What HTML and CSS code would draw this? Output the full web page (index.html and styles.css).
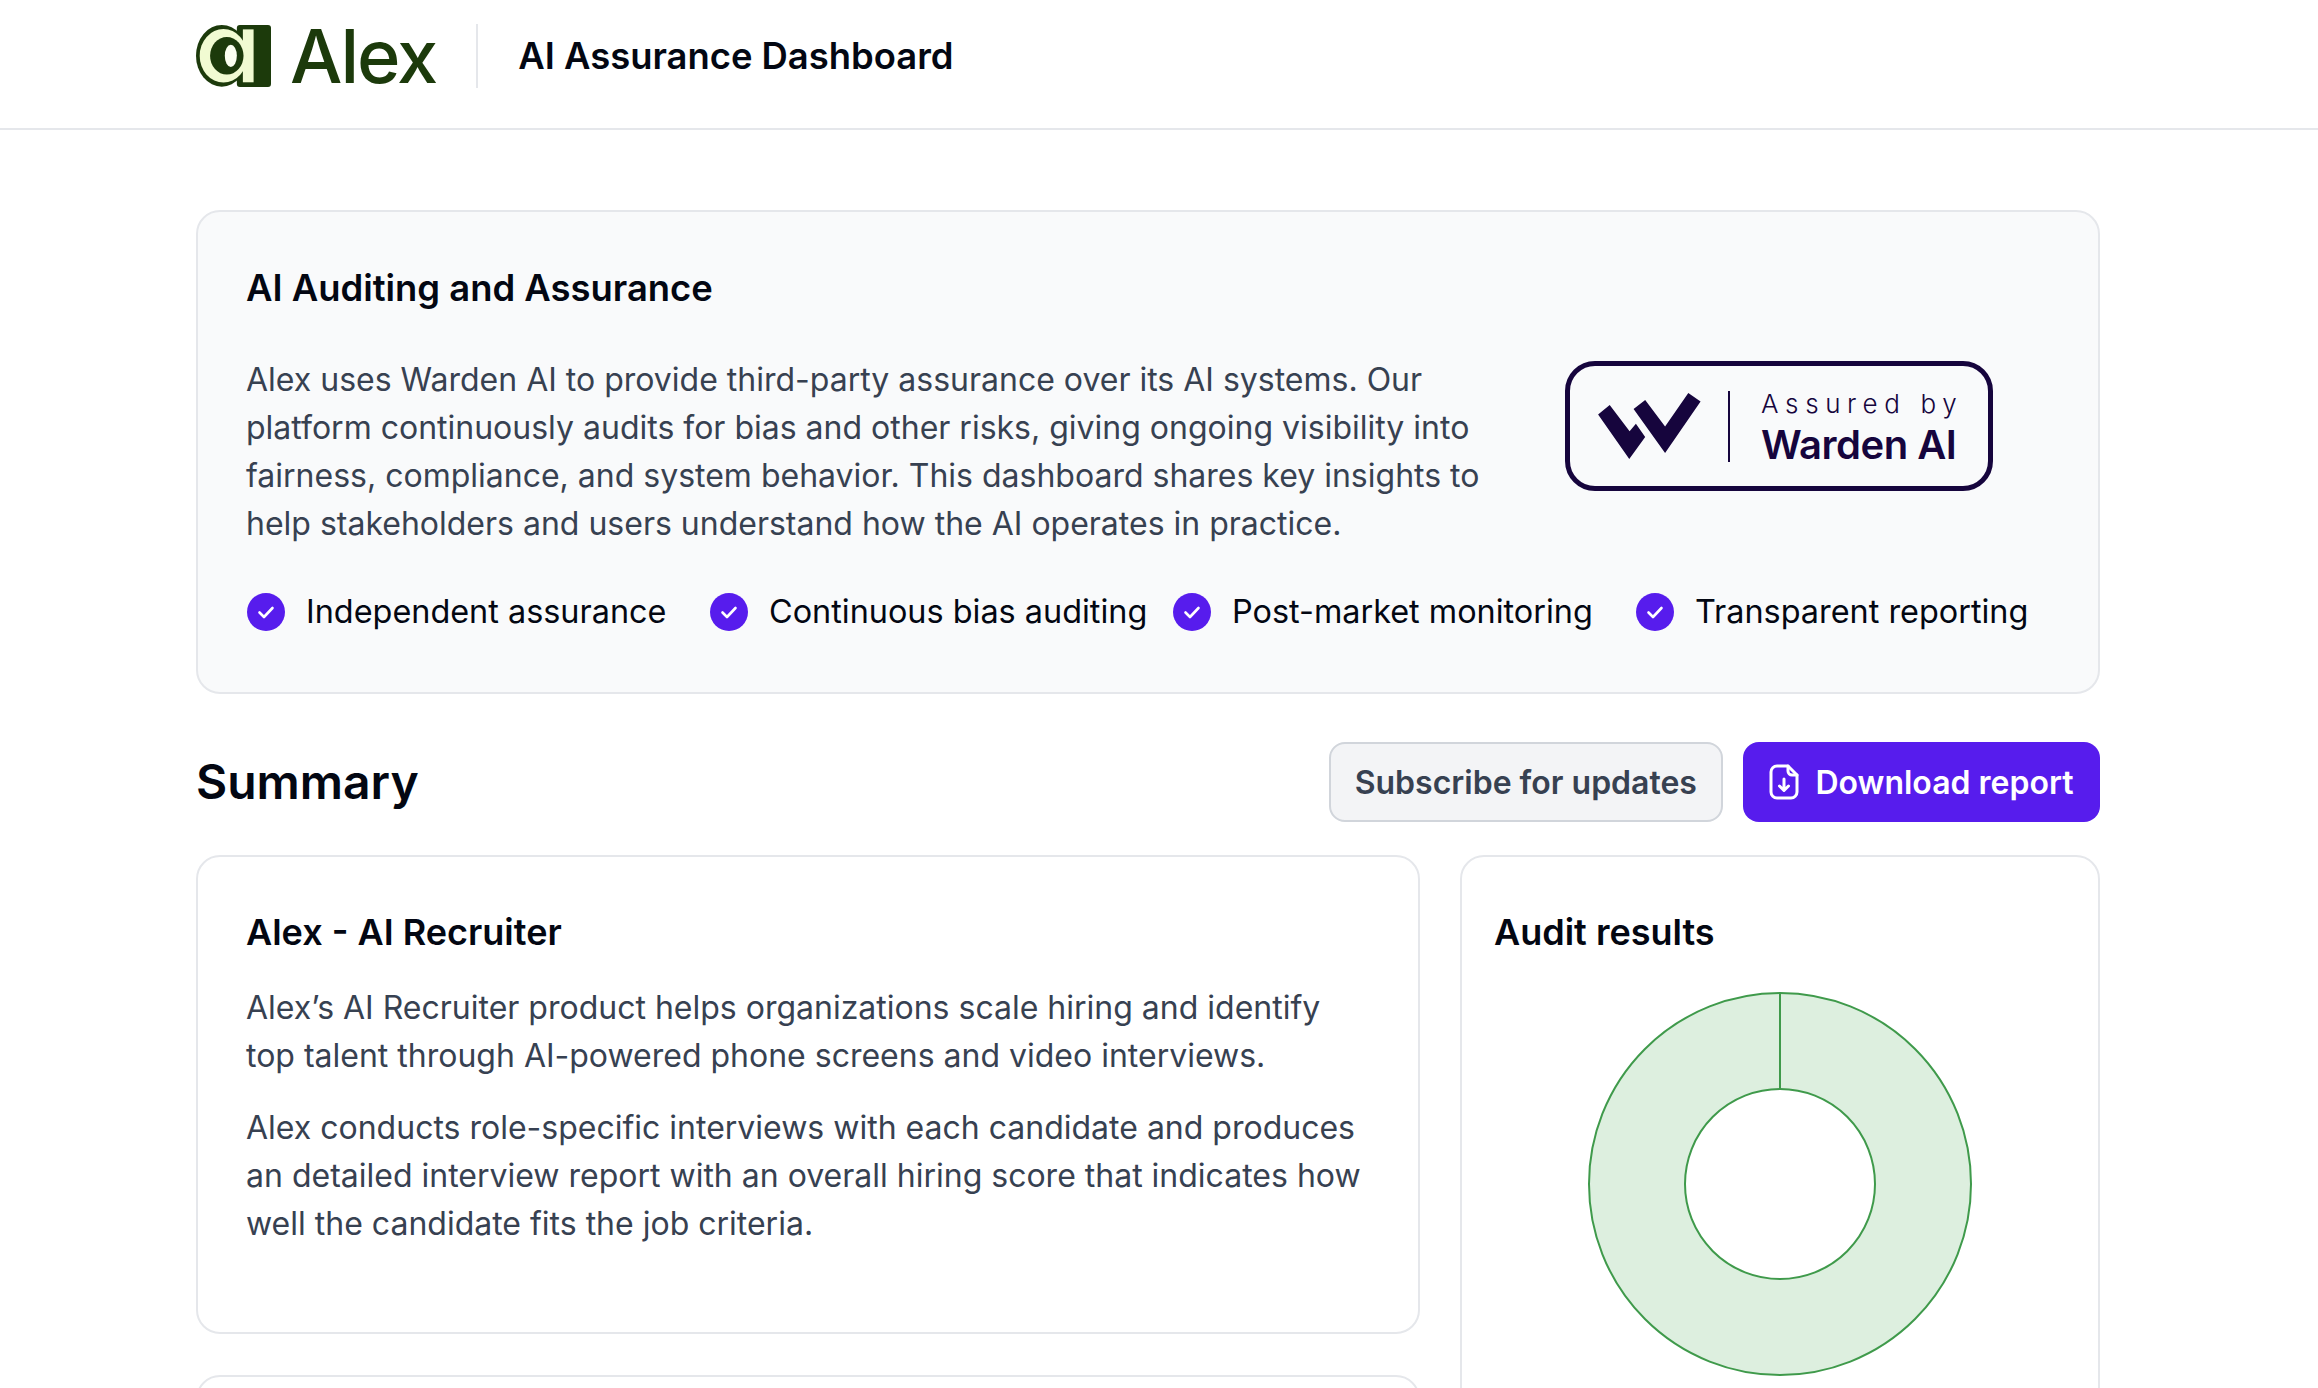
FILE: index.html
```html
<!DOCTYPE html>
<html lang="en">
<head>
<meta charset="utf-8">
<title>AI Assurance Dashboard</title>
<link rel="stylesheet" href="styles.css">
</head>
<body>

<header class="topbar">
	<div class="brand">
		<svg class="brand-mark" viewBox="18 20 224 185" xmlns="http://www.w3.org/2000/svg">
			<ellipse cx="95" cy="112" rx="77" ry="92" fill="#1c3a0b"/>
			<rect x="140" y="20" width="102" height="185" rx="9" fill="#1c3a0b"/>
			<ellipse cx="100" cy="112" rx="71" ry="80" fill="#f1fbd2"/>
			<rect x="158" y="33" width="32" height="158" fill="#f1fbd2"/>
			<ellipse cx="110" cy="112" rx="50" ry="56" fill="#1c3a0b"/>
			<ellipse cx="122" cy="112" rx="18" ry="33" fill="#fbfff0"/>
		</svg>
		<span class="brand-name">Alex</span>
	</div>
	<div class="topbar-title">AI Assurance Dashboard</div>
</header>

<main class="page">

	<section class="hero">
		<h2 class="hero-title">AI Auditing and Assurance</h2>
		<div class="hero-row">
			<p class="hero-text">Alex uses Warden AI to provide third-party assurance over its AI systems. Our platform continuously audits for bias and other risks, giving ongoing visibility into fairness, compliance, and system behavior. This dashboard shares key insights to help stakeholders and users understand how the AI operates in practice.</p>
			<div class="badge">
				<svg class="badge-mark" viewBox="173 157 310 199" xmlns="http://www.w3.org/2000/svg">
					<polygon points="173,222 208,193 268,272 287,250 315,290 267,356" fill="#16053d"/>
					<polygon points="280,205 315,178 375,258 445,157 482,183 375,338" fill="#16053d"/>
				</svg>
				<span class="badge-line"></span>
				<div class="badge-text">
					<span class="badge-small">Assured by</span>
					<span class="badge-big">Warden AI</span>
				</div>
			</div>
		</div>
		<ul class="checks">
			<li class="check"><svg class="check-icon" viewBox="0 0 38 38"><circle cx="19" cy="19" r="19" fill="#571ced"/><path d="M12.5 19.5l4.500 4.500 8.500-9" fill="none" stroke="#fff" stroke-width="2.600" stroke-linecap="round" stroke-linejoin="round"/></svg>Independent assurance</li>
			<li class="check"><svg class="check-icon" viewBox="0 0 38 38"><circle cx="19" cy="19" r="19" fill="#571ced"/><path d="M12.5 19.5l4.500 4.500 8.500-9" fill="none" stroke="#fff" stroke-width="2.600" stroke-linecap="round" stroke-linejoin="round"/></svg>Continuous bias auditing</li>
			<li class="check"><svg class="check-icon" viewBox="0 0 38 38"><circle cx="19" cy="19" r="19" fill="#571ced"/><path d="M12.5 19.5l4.500 4.500 8.500-9" fill="none" stroke="#fff" stroke-width="2.600" stroke-linecap="round" stroke-linejoin="round"/></svg>Post-market monitoring</li>
			<li class="check"><svg class="check-icon" viewBox="0 0 38 38"><circle cx="19" cy="19" r="19" fill="#571ced"/><path d="M12.5 19.5l4.500 4.500 8.500-9" fill="none" stroke="#fff" stroke-width="2.600" stroke-linecap="round" stroke-linejoin="round"/></svg>Transparent reporting</li>
		</ul>
	</section>

	<div class="summary-head">
		<h1 class="summary-title">Summary</h1>
		<div class="actions">
			<button class="btn btn-light">Subscribe for updates</button>
			<button class="btn btn-primary">
				<svg class="btn-icon" viewBox="0 0 30 36" xmlns="http://www.w3.org/2000/svg" fill="none" stroke="#fff" stroke-width="3" stroke-linecap="round" stroke-linejoin="round">
					<path d="M19 2H8a6 6 0 0 0-6 6v20a6 6 0 0 0 6 6h14a6 6 0 0 0 6-6V11z"/>
					<path d="M19 2v5a4 4 0 0 0 4 4h5"/>
					<path d="M15 15v11M10.500 22l4.500 4.500 4.500-4.500"/>
				</svg>
				Download report
			</button>
		</div>
	</div>

	<div class="cols">
		<div class="col-left">
			<section class="card card-product">
				<h3 class="card-title">Alex - AI Recruiter</h3>
				<p class="card-text">Alex’s AI Recruiter product helps organizations scale hiring and identify top talent through AI-powered phone screens and video interviews.</p>
				<p class="card-text">Alex conducts role-specific interviews with each candidate and produces an detailed interview report with an overall hiring score that indicates how well the candidate fits the job criteria.</p>
			</section>
			<section class="card card-next"></section>
		</div>
		<section class="card card-audit">
			<h3 class="card-title">Audit results</h3>
			<svg class="donut" viewBox="0 0 384 384" xmlns="http://www.w3.org/2000/svg">
				<path d="M192 1a191 191 0 1 1 0 382a191 191 0 1 1 0-382zM192 97a95 95 0 1 0 0 190a95 95 0 1 0 0-190z" fill="#ddefdf" fill-rule="evenodd" stroke="#3f9a4b" stroke-width="2"/>
				<line x1="192" y1="1" x2="192" y2="97" stroke="#3f9a4b" stroke-width="2"/>
			</svg>
		</section>
	</div>

</main>

</body>
</html>
```

FILE: styles.css
```css
html {
	background: #fff;
}

body {
	margin: 0;
	height: 1388px;
	overflow: hidden;
	font-family: Inter, "Noto Sans", sans-serif;
	color: #030712;
}

h1, h2, h3, p, ul {
	margin: 0;
	padding: 0;
}

/* top bar */
.topbar {
	display: flex;
	align-items: center;
	height: 112px;
	padding: 0 196px 16px;
	border-bottom: 2px solid #e5e7eb;
}

.brand {
	display: flex;
	align-items: center;
	gap: 19px;
	height: 64px;
	padding-right: 40px;
	border-right: 2px solid #e5e7eb;
}

.brand-mark {
	width: 75px;
	height: 62px;
}

.brand-name {
	font-size: 74px;
	line-height: 64px;
	font-weight: 500;
	letter-spacing: -2px;
	color: #1c3a0b;
}

.topbar-title {
	margin-left: 40px;
	font-size: 36.4px;
	font-weight: 600;
}

/* page */
.page {
	padding: 80px 218px 0 196px;
}

.hero {
	padding: 52px 23px 56px 48px;
	background: #f9fafb;
	border: 2px solid #e5e7eb;
	border-radius: 24px;
}

.hero-title {
	font-size: 36.4px;
	line-height: 48px;
	font-weight: 600;
}

.hero-row {
	display: flex;
	align-items: flex-start;
	margin-top: 44px;
}

.hero-text {
	width: 1271px;
	font-size: 32px;
	line-height: 48px;
	color: #374151;
}

.badge {
	display: flex;
	align-items: center;
	width: 428px;
	height: 130px;
	margin: 5px 0 0 48px;
	padding-left: 28px;
	box-sizing: border-box;
	border: 5px solid #16053d;
	border-radius: 30px;
}

.badge-mark {
	width: 103px;
	height: 66px;
}

.badge-line {
	width: 2px;
	height: 71px;
	margin: 0 31px 0 27px;
	background: #16053d;
}

.badge-text {
	display: flex;
	flex-direction: column;
	padding-top: 5px;
	color: #16053d;
}

.badge-small {
	font-size: 26px;
	line-height: 30px;
	font-weight: 300;
	letter-spacing: 6.6px;
}

.badge-big {
	margin-top: 3px;
	font-size: 40px;
	line-height: 46px;
	font-weight: 600;
	letter-spacing: -.5px;
}

.checks {
	display: grid;
	grid-template-columns: repeat(4, 1fr);
	gap: 24px;
	margin: 40px 0 0 1px;
	list-style: none;
}

.check {
	display: flex;
	align-items: center;
	gap: 21px;
	font-size: 32.4px;
	line-height: 48px;
	white-space: nowrap;
}

.check-icon {
	width: 38px;
	height: 38px;
	flex: none;
}

/* summary */
.summary-head {
	display: flex;
	align-items: center;
	justify-content: space-between;
	margin-top: 48px;
}

.summary-title {
	font-size: 48px;
	line-height: 64px;
	font-weight: 600;
}

.actions {
	display: flex;
	gap: 20px;
}

.btn {
	display: flex;
	align-items: center;
	height: 80px;
	box-sizing: border-box;
	border-radius: 16px;
	font-family: inherit;
	font-size: 32px;
	font-weight: 600;
}

.btn-light {
	padding: 0 24px;
	background: #f3f4f6;
	border: 2px solid #d1d5db;
	color: #374151;
}

.btn-primary {
	gap: 16px;
	padding: 0 26.5px;
	background: #571ced;
	border: 0;
	color: #fff;
}

.btn-icon {
	width: 30px;
	height: 36px;
}

/* cards */
.cols {
	display: grid;
	grid-template-columns: 1224px 640px;
	gap: 40px;
	margin-top: 33px;
}

.col-left {
	display: flex;
	flex-direction: column;
	gap: 41px;
}

.card {
	background: #fff;
	border: 2px solid #e5e7eb;
	border-radius: 24px;
}

.card-product {
	height: 479px;
	box-sizing: border-box;
	padding: 51px 48px 0;
}

.card-next {
	height: 400px;
}

.card-audit {
	height: 920px;
	box-sizing: border-box;
	padding: 51px 32px 0;
}

.card-title {
	font-size: 36px;
	line-height: 48px;
	font-weight: 600;
}

.card-text {
	margin-top: 24px;
	font-size: 32px;
	line-height: 48px;
	color: #374151;
}

.card-title + .card-text {
	margin-top: 28px;
}

.donut {
	display: block;
	width: 384px;
	height: 384px;
	margin: 36px auto 0;
}
```
